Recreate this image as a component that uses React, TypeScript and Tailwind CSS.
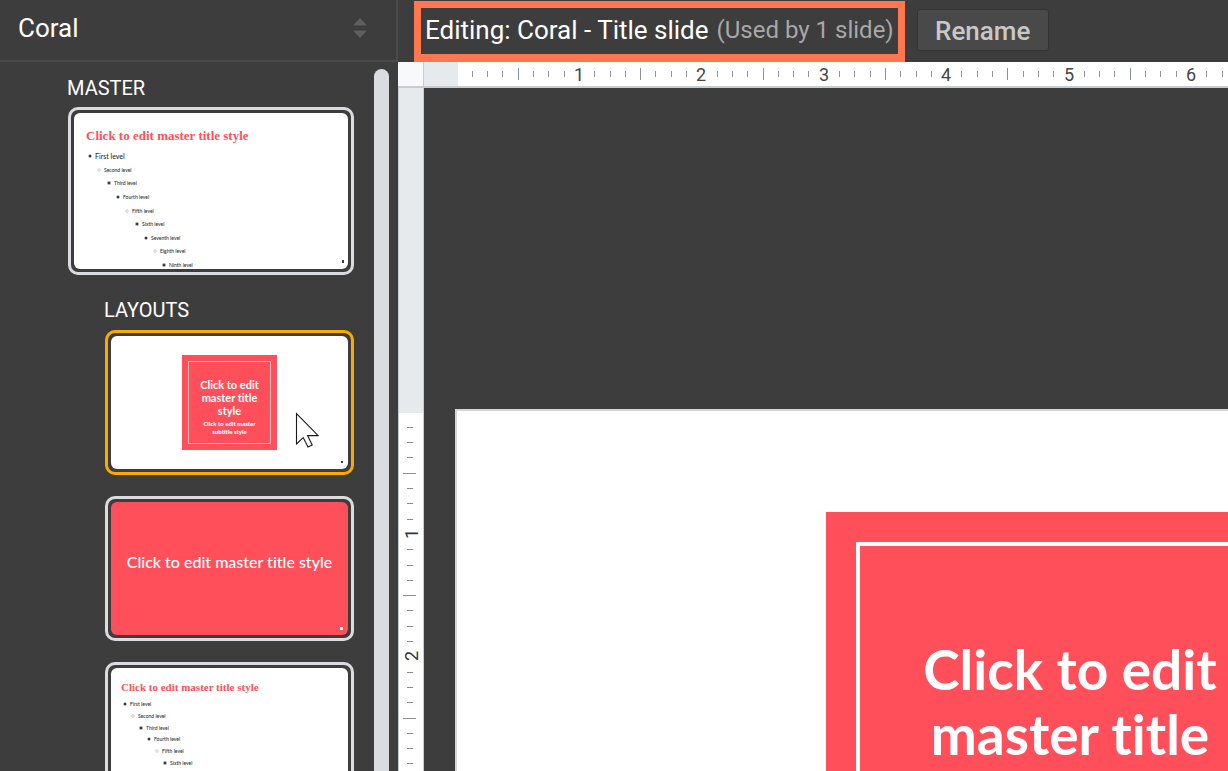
import React, { useLayoutEffect, useRef, useState } from "react";

const LEVELS = [
  "First level",
  "Second level",
  "Third level",
  "Fourth level",
  "Fifth level",
  "Sixth level",
  "Seventh level",
  "Eighth level",
  "Ninth level",
];

const EIGHTH = 15.3;

/** Length of the ruler in pixels, kept up to date as the window changes. */
function useLength(axis: "width" | "height") {
  const ref = useRef<SVGSVGElement>(null);
  const [length, setLength] = useState(0);
  useLayoutEffect(() => {
    const node = ref.current;
    if (!node) return;
    const measure = () => setLength(node.getBoundingClientRect()[axis]);
    measure();
    const observer = new ResizeObserver(measure);
    observer.observe(node);
    return () => observer.disconnect();
  }, [axis]);
  return { ref, length };
}

function ticksUpTo(length: number, origin: number) {
  const count = Math.max(0, Math.floor((length - origin - 6) / EIGHTH));
  return Array.from({ length: count }, (_, i) => i + 1);
}

function HorizontalRuler() {
  const { ref, length } = useLength("width");
  return (
    <svg ref={ref} className="h-6 min-w-0 flex-1 bg-white" role="img" aria-label="Horizontal ruler">
      <rect x="0" y="0" width="34" height="24" fill="#e6eaed" />
      {ticksUpTo(length, 32).map((n) => {
        const x = Math.round(32.5 + n * EIGHTH);
        if (n % 8 === 0) {
          return (
            <text key={n} x={x} y="19" textAnchor="middle" className="fill-[#444746] font-[Roboto,sans-serif] text-[18px]">
              {n / 8}
            </text>
          );
        }
        return n % 4 === 0 ? (
          <rect key={n} x={x} y="6" width="1" height="12" fill="#87939b" />
        ) : (
          <rect key={n} x={x} y="9" width="1" height="6" fill="#8f979d" />
        );
      })}
    </svg>
  );
}

function VerticalRuler() {
  const { ref, length } = useLength("height");
  return (
    <svg ref={ref} className="w-[26px] shrink-0 border-x border-[#c9cccf] bg-white" role="img" aria-label="Vertical ruler">
      <rect x="0" y="0" width="26" height="325" fill="#e6eaed" />
      {ticksUpTo(length, 323).map((n) => {
        const y = Math.round(323.5 + n * EIGHTH);
        if (n % 8 === 0) {
          return (
            <text
              key={n}
              x="0"
              y="0"
              textAnchor="middle"
              transform={`translate(19 ${y}) rotate(-90)`}
              className="fill-[#333638] font-[Roboto,sans-serif] text-[18px]"
            >
              {n / 8}
            </text>
          );
        }
        return n % 4 === 0 ? (
          <rect key={n} x="4" y={y} width="13" height="1" fill="#87939b" />
        ) : (
          <rect key={n} x="8" y={y} width="6" height="1" fill="#868c90" />
        );
      })}
    </svg>
  );
}

function Thumbnail({
  label,
  selected = false,
  className,
  children,
}: {
  label: string;
  selected?: boolean;
  className: string;
  children: React.ReactNode;
}) {
  return (
    <button
      type="button"
      aria-label={label}
      className={`relative flex w-full shrink-0 rounded-[10px] border-[3px] p-[3px] text-left ${
        selected ? "border-[#fbab00]" : "border-[#dadce0]"
      } ${className}`}
    >
      {children}
    </button>
  );
}

function Bullet({ level }: { level: number }) {
  const kind = level % 3;
  return (
    <svg viewBox="0 0 4 4" className="size-1 shrink-0">
      {kind === 0 && <circle cx="2" cy="2" r="1.5" fill="#333f45" />}
      {kind === 1 && <circle cx="2" cy="2" r="1.3" fill="none" stroke="#a9b0b4" strokeWidth="0.6" />}
      {kind === 2 && <rect x="0.6" y="0.6" width="2.8" height="2.8" fill="#333f45" />}
    </svg>
  );
}

function Outline({ levels, indent }: { levels: string[]; indent: number }) {
  return (
    <ul className="flex flex-1 flex-col justify-between font-[Lato,sans-serif] text-[5px] font-medium leading-[8px] text-[#1f2d33]">
      {levels.map((text, level) => (
        <li key={text} className="flex items-center gap-[3px]" style={{ paddingLeft: Math.round(level * indent) }}>
          <Bullet level={level} />
          <span className={level === 0 && levels.length > 6 ? "text-[7px]" : ""}>{text}</span>
        </li>
      ))}
    </ul>
  );
}

function Cursor() {
  return (
    <svg viewBox="0 0 24 36" className="absolute left-[187px] top-[79px] h-9 w-6">
      <path
        d="M1.5 1.5V32L8.2 25.6L13 35L17.2 33L12.6 23.6H23.2Z"
        fill="#fff"
        stroke="#1a1a1a"
        strokeWidth="1.1"
      />
    </svg>
  );
}

export default function App() {
  return (
    <div className="flex h-screen overflow-hidden bg-[#3d3d3d] font-[Roboto,sans-serif] text-white [font-variant-ligatures:none]">
      <aside className="flex w-[398px] shrink-0 flex-col">
        <div className="relative flex h-[62px] shrink-0 items-center border-b-2 border-r-2 border-[#4a4a4a]">
          <select
            aria-label="Theme"
            className="w-full appearance-none bg-transparent pb-1 pl-[18px] text-[26px] leading-8 outline-none"
          >
            <option>Coral</option>
          </select>
          <svg viewBox="0 0 14 20" className="pointer-events-none absolute right-[29px] top-[18px] h-5 w-[14px]">
            <path d="M7 0L14 7.5H0ZM7 20L0 12.5H14Z" fill="#5e5e5e" />
          </svg>
        </div>

        <div className="flex min-h-0 flex-1 pr-[9px] pt-[7px]">
          <div className="flex min-w-0 flex-1 flex-col overflow-hidden pl-[67px] pr-5 pt-1">
            <h2 className="text-[20px] leading-[30px]">MASTER</h2>
            <div className="pl-px pt-1">
              <Thumbnail label="Master" className="h-[168px]">
                <div className="relative flex flex-1 flex-col overflow-hidden rounded-md bg-white pl-[12px] pt-[14px]">
                  <span className="font-['Liberation_Serif',serif] text-[13px] font-bold leading-[18px] text-[#ff4f5b]">
                    Click to edit master title style
                  </span>
                  <div className="flex flex-1 pl-[2px] pt-[7px]">
                    <Outline levels={LEVELS} indent={9.3} />
                  </div>
                  <i className="absolute bottom-[6px] right-1 h-[3px] w-[2px] bg-[#333f45]" />
                </div>
              </Thumbnail>
            </div>

            <div className="flex flex-col pl-[37px] pt-5">
              <h2 className="text-[20px] leading-[30px]">LAYOUTS</h2>
              <div className="flex flex-col gap-[21px] pl-px pt-[5px]">
                <Thumbnail label="Title slide" selected className="h-[145px]">
                  <div className="relative flex flex-1 items-center justify-center rounded-md bg-white">
                    <div className="flex size-[95px] bg-[#ff4f5b] p-[6px]">
                      <div className="flex flex-1 flex-col items-center gap-[3px] border border-[#ffb9bd] pt-[16px] text-center font-[Lato,sans-serif] font-bold">
                        <span className="text-[11px] leading-[13px]">
                          Click to edit
                          <br />
                          master title
                          <br />
                          style
                        </span>
                        <span className="text-[6px] font-black leading-[8px]">
                          Click to edit master
                          <br />
                          subtitle style
                        </span>
                      </div>
                    </div>
                    <i className="absolute bottom-[6px] right-[5px] size-[2px] bg-[#333f45]" />
                  </div>
                  <Cursor />
                </Thumbnail>

                <Thumbnail label="Section header" className="h-[145px]">
                  <div className="relative flex flex-1 items-center justify-center rounded-md bg-[#ff4f5b] pb-[14px] font-[Lato,sans-serif] text-[16px] font-medium">
                    Click to edit master title style
                    <i className="absolute bottom-[5px] right-[5px] size-[3px] bg-white" />
                  </div>
                </Thumbnail>

                <Thumbnail label="Title and body" className="h-[145px]">
                  <div className="flex flex-1 flex-col overflow-hidden rounded-md bg-white pl-[10px] pt-[10px]">
                    <span className="font-['Liberation_Serif',serif] text-[11px] font-bold leading-[18px] text-[#ff4f5b]">
                      Click to edit master title style
                    </span>
                    <div className="flex h-[71px] pl-[2px] pt-[4px]">
                      <Outline levels={LEVELS.slice(0, 6)} indent={8} />
                    </div>
                  </div>
                </Thumbnail>
              </div>
            </div>
          </div>
          <div className="w-[15px] shrink-0 rounded-t-full bg-[#dadce0]" />
        </div>
      </aside>

      <main className="flex min-w-0 flex-1 flex-col">
        <header className="flex h-[62px] shrink-0 items-start gap-3 pl-4 pt-px">
          <div className="flex h-[61px] shrink-0 items-center gap-2 whitespace-nowrap border-[7px] border-b-8 border-[#ff7750] px-1 pb-[3px]">
            <h1 className="text-[26px] leading-8">Editing: Coral - Title slide</h1>
            <span className="text-[24px] leading-8 text-[#a8a8a8]">(Used by 1 slide)</span>
          </div>
          <button
            type="button"
            className="mt-2 h-[42px] w-[132px] shrink-0 rounded-[3px] border border-[#343434] bg-[#494949] text-[26px] font-medium leading-[42px] text-[#c8c8c8]"
          >
            Rename
          </button>
        </header>

        <div className="flex h-[26px] shrink-0 border-b-2 border-[#c9cccf]">
          <div className="w-[26px] shrink-0 border-r border-[#c9cccf] bg-[#f8f9fa]" />
          <HorizontalRuler />
        </div>

        <div className="flex min-h-0 flex-1">
          <VerticalRuler />
          <div className="min-w-0 flex-1 overflow-hidden pl-[31px] pt-[321px]">
            <section className="flex h-[690px] w-[1230px] justify-center border-2 border-[#d6d6d6] bg-white pt-[101px] text-center">
              <div className="flex size-[489px] bg-[#ff4f5b] p-[30px]">
                <div className="flex-1 border-4 border-white pt-[91px] font-[Lato,sans-serif] text-[55px] font-bold leading-[65px]">
                  Click to edit
                  <br />
                  master title
                </div>
              </div>
            </section>
          </div>
        </div>
      </main>
    </div>
  );
}
